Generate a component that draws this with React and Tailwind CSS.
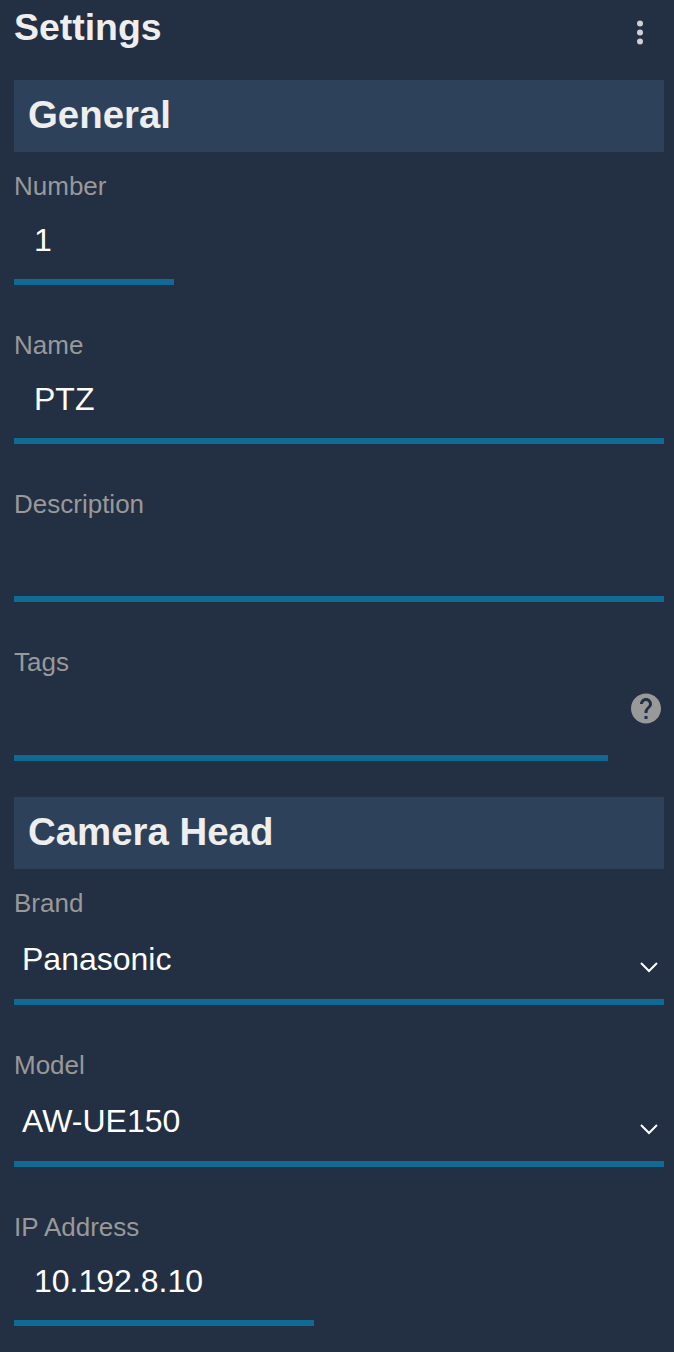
function Section({ children }) {
  return <h2 className="flex h-[72px] items-center bg-[#2d415a] px-[14px] pb-[2px] text-[38.4px] leading-[44px] font-bold text-[#eeeeee]">{children}</h2>;
}

function Label({ children }) {
  return <label className="block h-[30px] text-[26px] leading-[30px] text-[#999999]">{children}</label>;
}

function TextField({ label, value, width = "w-full", height = "h-[84px]", className = "" }) {
  return (
    <div className={className}>
      <Label>{label}</Label>
      <div className={`${width} ${height} border-b-6 border-[#116a94] pt-[21px] pl-5 text-[32px] leading-[36px] text-white`}>{value}</div>
    </div>
  );
}

function SelectField({ label, value, className = "" }) {
  return (
    <div className={className}>
      <Label>{label}</Label>
      <div className="flex h-[87px] justify-between border-b-6 border-[#116a94] pt-[23px] pr-[6px] pl-2 text-[32px] leading-[36px] text-white">
        <span>{value}</span>
        <svg className="mt-5 h-3 w-[18px]" viewBox="0 0 18 12" fill="none" stroke="white" strokeWidth="2">
          <path d="M1 2 9 10 17 2" />
        </svg>
      </div>
    </div>
  );
}

export default function App() {
  return (
    <main className="h-[1352px] w-[674px] overflow-hidden bg-[#232f42] pr-[10px] pl-[14px] font-['Liberation_Sans',Arial,sans-serif]">
      <header className="flex h-20 justify-between">
        <h1 className="pt-[6px] text-[37.44px] leading-[43px] font-bold text-[#eeeeee]">Settings</h1>
        <svg className="mt-5 mr-5 h-[25px] w-2" viewBox="0 0 8 25" fill="#d0d0d0">
          <circle cx="4" cy="3.5" r="3" /><circle cx="4" cy="12.5" r="3" /><circle cx="4" cy="21.5" r="3" />
        </svg>
      </header>
      <Section>General</Section>
      <TextField label="Number" value="1" width="w-40" className="h-[159px] pt-[19px]" />
      <TextField label="Name" value="PTZ" className="h-[159px] pt-[19px]" />
      <TextField label="Description" value="" height="h-[83px]" className="h-[158px] pt-[19px]" />
      <div className="flex h-[169px] justify-between">
        <TextField label="Tags" value="" width="w-[594px]" className="pt-[19px]" />
        <svg className="mt-[65px] mr-[3px] h-[31px] w-[30px]" viewBox="2 1.67 20 20.67" fill="#999999">
          <path d="M12 2C6.48 2 2 6.48 2 12s4.48 10 10 10 10-4.48 10-10S17.52 2 12 2zm1 17h-2v-2h2v2zm2.07-7.75-.9.92C13.45 12.9 13 13.5 13 15h-2v-.5c0-1.1.45-2.1 1.17-2.83l1.24-1.26c.37-.36.59-.86.59-1.41 0-1.1-.9-2-2-2s-2 .9-2 2H8c0-2.21 1.79-4 4-4s4 1.79 4 4c0 .88-.36 1.68-.93 2.25z" />
        </svg>
      </div>
      <Section>Camera Head</Section>
      <SelectField label="Brand" value="Panasonic" className="h-[162px] pt-[19px]" />
      <SelectField label="Model" value="AW-UE150" className="h-[162px] pt-[19px]" />
      <TextField label="IP Address" value="10.192.8.10" width="w-[300px]" className="pt-[19px]" />
    </main>
  );
}
